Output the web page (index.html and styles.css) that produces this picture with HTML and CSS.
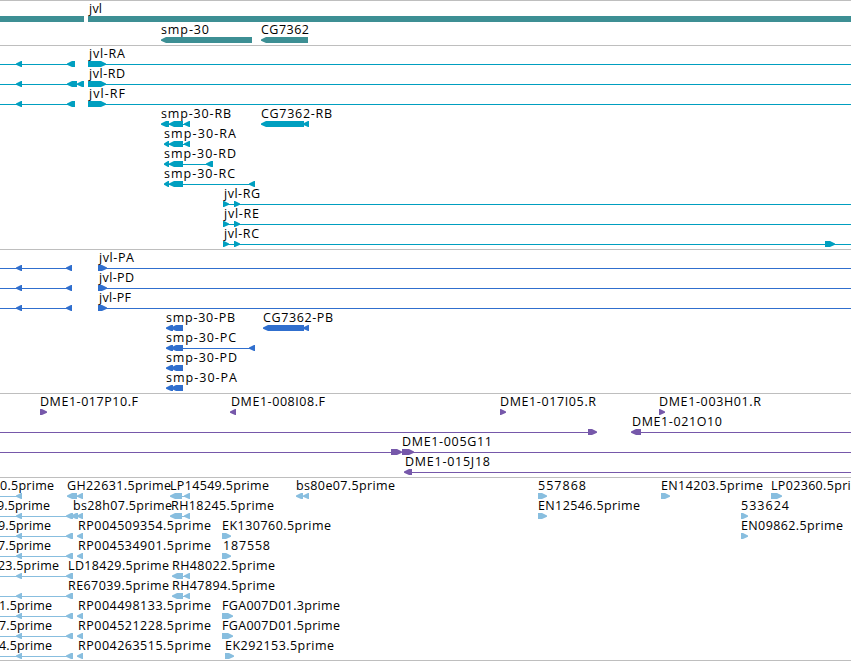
FILE: index.html
```html
<!DOCTYPE html>
<html lang="en">
<head>
<meta charset="utf-8">
<title>Genome browser</title>
<link rel="stylesheet" href="styles.css">
</head>
<body>
<main class="browser" id="browser"></main>
<script src="tracks.js"></script>
</body>
</html>
```
FILE: styles.css
```css
body {
  margin: 0;
  background: #fff;
}

.browser {
  width: 851px;
  height: 661px;
  overflow: hidden;
  display: flex;
  flex-direction: column;
}

.track {
  box-sizing: border-box;
  display: flex;
  flex-direction: column;
  flex-shrink: 0;
  padding: 1px 0 2px;
  border-top: 1px solid #bebebe;
}

.track.gene { color: #3d8f94; gap: 1px; }
.track.transcript { color: #009fc0; }
.track.protein { color: #306fce; }
.track.bac { color: #7658aa; }
.track.est {
  color: #88bedf;
  padding-bottom: 1px;
  border-bottom: 1px solid #bebebe;
}

.row {
  display: block;
  flex-shrink: 0;
  width: 851px;
  height: 20px;
  overflow: visible;
  fill: currentColor;
}

.row text {
  fill: #000;
  font-family: "Open Sans", "Noto Sans", sans-serif;
  font-size: 12.5px;
}
```
FILE: tracks.js
```js
// Label: [text, left, right]. Intron line: [from, to].
// Exon: [from, to, direction], direction is '<', '>' or '-' for a plain block.
const W = 851;

function jvlTranscript(name, extra) {
  return {
    labels: [[name, 89, 125]],
    lines: [[0, 70], [100, W]],
    exons: [[16, 22, '<'], ...extra, [88, 106, '>']]
  };
}
function jvlLate(name, end) {
  return {
    labels: [[name, 224, end]],
    lines: [[224, W]],
    exons: [[223, 229, '>'], [234, 240, '>']]
  };
}
function jvlProtein(name, end) {
  return {
    labels: [[name, 99, end]],
    lines: [[0, 70], [100, W]],
    exons: [[16, 22, '<'], [66, 72, '<'], [98, 107, '>']]
  };
}

const lateC = jvlLate('jvl-RC', 259);
lateC.exons.push([825, 835, '>']);

const tracks = [
  { kind: 'gene', rows: [
    { labels: [['jvl', 89, 102]], exons: [[0, 84, '-'], [88, W, '-']] },
    { labels: [['smp-30', 161, 209], ['CG7362', 261, 309]], exons: [[161, 252, '<'], [261, 308, '<']] }
  ] },
  { kind: 'transcript', rows: [
    jvlTranscript('jvl-RA', [[67, 75, '<']]),
    jvlTranscript('jvl-RD', [[67, 77, '<'], [77, 84, '<']]),
    jvlTranscript('jvl-RF', [[67, 75, '<']]),
    { labels: [['smp-30-RB', 161, 231], ['CG7362-RB', 261, 332]], lines: [[164, 188]],
      exons: [[161, 169, '<'], [169, 183, '<'], [184, 190, '<'], [261, 304, '<'], [303, 309, '<']] },
    { labels: [['smp-30-RA', 164, 236]], lines: [[166, 188]],
      exons: [[164, 169, '<'], [169, 183, '<'], [184, 190, '<']] },
    { labels: [['smp-30-RD', 164, 236]], lines: [[166, 210]],
      exons: [[164, 169, '<'], [169, 183, '<'], [206, 213, '<']] },
    { labels: [['smp-30-RC', 164, 235]], lines: [[166, 252]],
      exons: [[164, 169, '<'], [169, 183, '<'], [249, 255, '<']] },
    jvlLate('jvl-RG', 260),
    jvlLate('jvl-RE', 259),
    lateC
  ] },
  { kind: 'protein', rows: [
    jvlProtein('jvl-PA', 134),
    jvlProtein('jvl-PD', 134),
    jvlProtein('jvl-PF', 131),
    { labels: [['smp-30-PB', 166, 235], ['CG7362-PB', 263, 333]],
      exons: [[166, 173, '<'], [171, 183, '<'], [263, 304, '<'], [303, 309, '<']] },
    { labels: [['smp-30-PC', 166, 236]], lines: [[180, 252]],
      exons: [[166, 173, '<'], [171, 183, '<'], [249, 255, '<']] },
    { labels: [['smp-30-PD', 166, 237]], exons: [[166, 173, '<'], [171, 183, '<']] },
    { labels: [['smp-30-PA', 166, 237]], exons: [[166, 173, '<'], [171, 183, '<']] }
  ] },
  { kind: 'bac', rows: [
    { labels: [['DME1-017P10.F', 40, 138], ['DME1-008I08.F', 231, 325], ['DME1-017I05.R', 500, 596], ['DME1-003H01.R', 659, 761]],
      exons: [[40, 47, '>'], [230, 236, '<'], [500, 506, '>'], [659, 665, '>']] },
    { labels: [['DME1-021O10', 632, 722]], lines: [[0, 590], [640, W]],
      exons: [[588, 597, '>'], [631, 641, '<']] },
    { labels: [['DME1-005G11', 402, 492]], lines: [[0, 395], [410, W]],
      exons: [[391, 402, '>'], [402, 414, '>']] },
    { labels: [['DME1-015J18', 405, 490]], lines: [[408, W]], exons: [[404, 412, '<']] }
  ] },
  { kind: 'est', rows: [
    { labels: [['0.5prime', 0, 54], ['GH22631.5prime', 67, 171], ['LP14549.5prime', 170, 269], ['bs80e07.5prime', 296, 395],
        ['557868', 538, 586], ['EN14203.5prime', 661, 763], ['LP02360.5prime', 771, 870]],
      lines: [[0, 20], [70, 81], [175, 188]],
      exons: [[16, 22, '<'], [67, 77, '<'], [77, 83, '<'], [170, 182, '<'], [184, 190, '<'],
        [296, 303, '<'], [303, 309, '<'], [538, 547, '>'], [661, 670, '>'], [771, 782, '>']] },
    { labels: [['9.5prime', -3, 50], ['bs28h07.5prime', 73, 172], ['RH18245.5prime', 171, 274],
        ['EN12546.5prime', 538, 640], ['533624', 741, 789]],
      lines: [[0, 81], [175, 188]],
      exons: [[16, 22, '<'], [66, 73, '<'], [71, 78, '<'], [77, 83, '<'], [170, 182, '<'], [184, 190, '<'],
        [538, 547, '>'], [741, 748, '>']] },
    { labels: [['9.5prime', -2, 51], ['RP004509354.5prime', 78, 211], ['EK130760.5prime', 222, 331], ['EN09862.5prime', 741, 843]],
      lines: [[0, 70]], exons: [[16, 22, '<'], [66, 73, '<'], [77, 83, '<'], [222, 231, '>'], [741, 748, '>']] },
    { labels: [['7.5prime', -2, 51], ['RP004534901.5prime', 78, 211], ['187558', 223, 270]],
      lines: [[0, 70]], exons: [[16, 22, '<'], [66, 73, '<'], [77, 83, '<'], [222, 231, '>']] },
    { labels: [['23.5prime', -2, 59], ['LD18429.5prime', 68, 169], ['RH48022.5prime', 172, 275]],
      lines: [[0, 70], [175, 188]], exons: [[16, 22, '<'], [66, 73, '<'], [172, 183, '<'], [184, 190, '<']] },
    { labels: [['RE67039.5prime', 68, 169], ['RH47894.5prime', 172, 275]],
      lines: [[0, 70], [175, 188]], exons: [[16, 22, '<'], [66, 73, '<'], [172, 183, '<'], [184, 190, '<']] },
    { labels: [['1.5prime', -1, 52], ['RP004498133.5prime', 78, 211], ['FGA007D01.3prime', 222, 340]],
      lines: [[0, 70]], exons: [[16, 22, '<'], [66, 73, '<'], [77, 83, '<'], [222, 233, '>']] },
    { labels: [['7.5prime', -1, 52], ['RP004521228.5prime', 78, 211], ['FGA007D01.5prime', 222, 340]],
      lines: [[0, 70]], exons: [[16, 22, '<'], [66, 73, '<'], [77, 83, '<'], [222, 233, '>']] },
    { labels: [['4.5prime', -1, 52], ['RP004263515.5prime', 78, 211], ['EK292153.5prime', 225, 334]],
      lines: [[0, 70]], exons: [[16, 22, '<'], [66, 73, '<'], [77, 83, '<'], [225, 234, '>']] }
  ] }
];

function exonShape([a, b, dir]) {
  if (dir === '-') return `<rect x="${a}" y="14" width="${b - a}" height="6"/>`;
  const t = Math.min(6, b - a);
  const pts = dir === '<'
    ? [[a, 16.5], [a + t - 1, 14], [b, 14], [b, 20], [a + t - 1, 20], [a, 17.8]]
    : [[b, 16.5], [b - t + 1, 14], [a, 14], [a, 20], [b - t + 1, 20], [b, 17.8]];
  return `<polygon points="${pts.map(p => p.join()).join(' ')}"/>`;
}

function rowMarkup({ labels = [], lines = [], exons = [] }) {
  return '<svg class="row" viewBox="0 0 851 20">' +
    lines.map(([a, b]) => `<rect x="${a}" y="17" width="${b - a}" height="1"/>`).join('') +
    exons.map(exonShape).join('') +
    labels.map(([s, a, b]) => `<text x="${a}" y="11" textLength="${b - a}">${s}</text>`).join('') +
    '</svg>';
}

document.getElementById('browser').innerHTML = tracks
  .map(t => `<section class="track ${t.kind}">${t.rows.map(rowMarkup).join('')}</section>`)
  .join('');
```
